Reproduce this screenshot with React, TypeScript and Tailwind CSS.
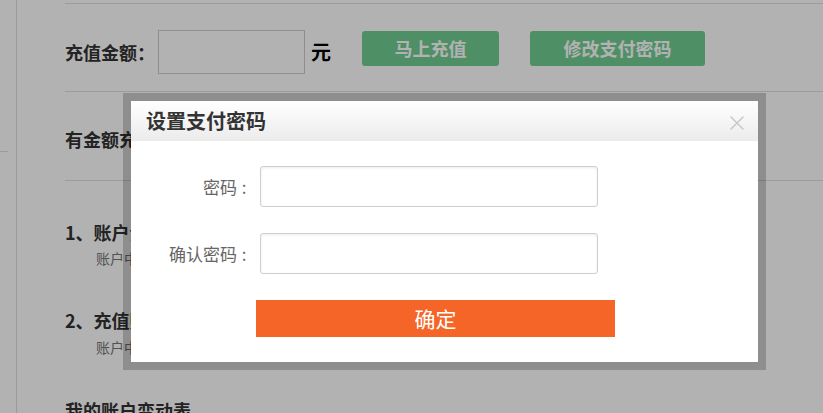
import React from "react";

const font = "font-['Noto_Sans_CJK_SC','Liberation_Sans',sans-serif]";

function CloseIcon() {
  return (
    <svg width="14" height="14" viewBox="0 0 14 14" className="block">
      <path d="M1 1 L13 13 M13 1 L1 13" stroke="#c9c9c9" strokeWidth="1.6" strokeLinecap="round" />
    </svg>
  );
}

function Field({ label }: { label: string }) {
  return (
    <div className="flex items-center">
      <label className="flex w-[119px] items-center justify-end text-[17px] leading-[22px] text-[#666]">
        <span>{label}</span>
        <span className="ml-[1px] w-[12px] text-center">:</span>
      </label>
      <input
        type="password"
        className="ml-[10px] h-[41px] w-[338px] rounded-[3px] border border-[#cfcfcf] bg-white shadow-[inset_0_1px_3px_rgba(0,0,0,0.08)] outline-none"
      />
    </div>
  );
}

export default function App() {
  return (
    <div className={`relative h-[413px] w-[823px] overflow-hidden bg-white ${font}`}>
      {/* page */}
      <div className="flex h-full">
        <aside className="w-[17px] shrink-0 border-r border-[#dfdfdf]">
          <div className="mt-[151px] h-px w-[8px] bg-[#dfdfdf]" />
        </aside>
        <main className="ml-[48px] flex-1">
          <div className="h-[3px]" />
          <section className="flex h-[88px] items-start border-t border-[#dfdfdf] pt-[26px]">
            <div className="flex h-[44px] items-center">
              <span className="w-[93px] text-[18px] font-bold leading-[24px] text-[#333]">充值金额：</span>
              <input className="h-[44px] w-[147px] border border-[#cccccc] bg-white outline-none" />
              <span className="ml-[6px] w-[20px] text-[20px] font-bold leading-[24px] text-black">元</span>
            </div>
            <button className="ml-[31px] mt-[1px] h-[35px] w-[137px] rounded-[3px] bg-[#70cd93] text-[18px] font-bold text-white">
              马上充值
            </button>
            <button className="ml-[31px] mt-[1px] h-[35px] w-[175px] rounded-[3px] bg-[#70cd93] text-[18px] font-bold text-white">
              修改支付密码
            </button>
          </section>
          <section className="flex h-[89px] items-center border-t border-[#dfdfdf] pt-[6px]">
            <span className="text-[18px] font-bold leading-[24px] text-[#333]">有金额充值卡？点此兑换</span>
          </section>
          <section className="border-t border-[#dfdfdf]">
            <h3 className="mt-[39px] text-[18px] font-bold leading-[24px] text-[#333]">1、账户余额说明</h3>
            <p className="ml-[31px] mt-[4px] text-[14px] leading-[20px] text-[#777]">账户中的余额可用于支付订单费用</p>
            <h3 className="mt-[40px] text-[18px] font-bold leading-[24px] text-[#333]">2、充值赠送说明</h3>
            <p className="ml-[31px] mt-[5px] text-[14px] leading-[20px] text-[#777]">账户中的赠送金额不可提现</p>
            <h3 className="mt-[41px] text-[18px] font-bold leading-[24px] text-[#333]">我的账户变动表</h3>
          </section>
        </main>
      </div>

      {/* mask */}
      <div className="absolute inset-0 bg-black/30" />

      {/* dialog */}
      <div className="absolute left-[123px] top-[93px] w-[643px] border-[8px] border-black/20 bg-white bg-clip-padding">
        <div className="flex h-[40px] items-center justify-between bg-gradient-to-b from-white to-[#ebebeb] pl-[15px] pr-[14px]">
          <h2 className="text-[20px] font-bold leading-[26px] text-[#333]">设置支付密码</h2>
          <button className="mt-[4px]"><CloseIcon /></button>
        </div>
        <div className="flex flex-col gap-[26px] pb-[25px] pt-[25px]">
          <Field label="密码" />
          <Field label="确认密码" />
          <button className="ml-[125px] h-[37px] w-[359px] bg-[#f56528] text-[21px] leading-[37px] text-white">确定</button>
        </div>
      </div>
    </div>
  );
}
